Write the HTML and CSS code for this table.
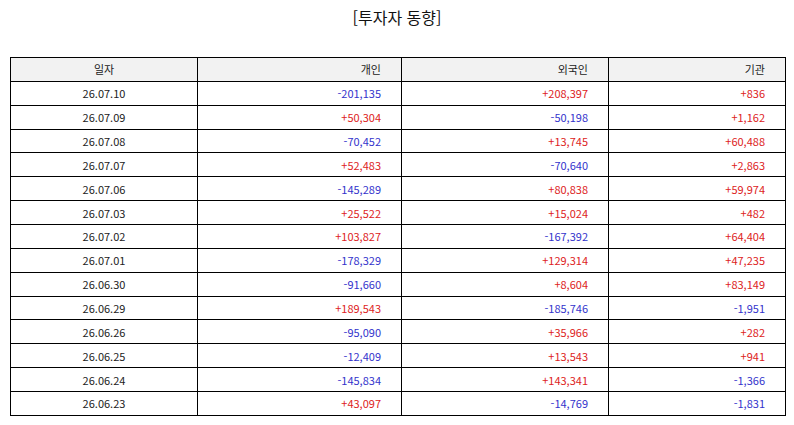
FILE: index.html
```html
<!DOCTYPE html>
<html lang="ko">
<head>
<meta charset="utf-8">
<title>투자자 동향</title>
<link rel="stylesheet" href="styles.css">
</head>
<body>
<h1 class="title">[투자자 동향]</h1>
<table class="grid">
  <colgroup>
    <col class="c-date"><col class="c-ind"><col class="c-for"><col class="c-inst">
  </colgroup>
  <thead>
    <tr><th class="center">일자</th><th>개인</th><th>외국인</th><th>기관</th></tr>
  </thead>
  <tbody>
    <tr><td class="center">26.07.10</td><td class="neg">-201,135</td><td class="pos">+208,397</td><td class="pos">+836</td></tr>
    <tr><td class="center">26.07.09</td><td class="pos">+50,304</td><td class="neg">-50,198</td><td class="pos">+1,162</td></tr>
    <tr><td class="center">26.07.08</td><td class="neg">-70,452</td><td class="pos">+13,745</td><td class="pos">+60,488</td></tr>
    <tr><td class="center">26.07.07</td><td class="pos">+52,483</td><td class="neg">-70,640</td><td class="pos">+2,863</td></tr>
    <tr><td class="center">26.07.06</td><td class="neg">-145,289</td><td class="pos">+80,838</td><td class="pos">+59,974</td></tr>
    <tr><td class="center">26.07.03</td><td class="pos">+25,522</td><td class="pos">+15,024</td><td class="pos">+482</td></tr>
    <tr><td class="center">26.07.02</td><td class="pos">+103,827</td><td class="neg">-167,392</td><td class="pos">+64,404</td></tr>
    <tr><td class="center">26.07.01</td><td class="neg">-178,329</td><td class="pos">+129,314</td><td class="pos">+47,235</td></tr>
    <tr><td class="center">26.06.30</td><td class="neg">-91,660</td><td class="pos">+8,604</td><td class="pos">+83,149</td></tr>
    <tr><td class="center">26.06.29</td><td class="pos">+189,543</td><td class="neg">-185,746</td><td class="neg">-1,951</td></tr>
    <tr><td class="center">26.06.26</td><td class="neg">-95,090</td><td class="pos">+35,966</td><td class="pos">+282</td></tr>
    <tr><td class="center">26.06.25</td><td class="neg">-12,409</td><td class="pos">+13,543</td><td class="pos">+941</td></tr>
    <tr><td class="center">26.06.24</td><td class="neg">-145,834</td><td class="pos">+143,341</td><td class="neg">-1,366</td></tr>
    <tr><td class="center">26.06.23</td><td class="pos">+43,097</td><td class="neg">-14,769</td><td class="neg">-1,831</td></tr>
  </tbody>
</table>
</body>
</html>
```
FILE: styles.css
```css
html, body {
  margin: 0;
  padding: 0;
  background: #ffffff;
}
body {
  font-family: "Noto Sans CJK KR", "Noto Sans", sans-serif;
  color: #222222;
}
.title {
  margin: 0;
  height: 57px;
  padding-top: 6px;
  box-sizing: border-box;
  font-size: 16px;
  font-weight: normal;
  line-height: 22px;
  text-align: center;
  color: #111111;
}
.grid {
  margin: 0 0 0 10px;
  width: 775px;
  border-collapse: collapse;
  table-layout: fixed;
  font-size: 11px;
}
.c-date { width: 187px; }
.c-ind { width: 204px; }
.c-for { width: 207px; }
.c-inst { width: 177px; }
.grid tr {
  height: 23.87px;
}
.grid th, .grid td {
  border: 1px solid #000000;
  padding: 0 20px 0 4px;
  text-align: right;
  line-height: 14px;
  font-weight: normal;
  white-space: nowrap;
}
.grid th {
  background: #f2f2f2;
  color: #222222;
}
.grid .center {
  text-align: center;
  padding: 0;
  color: #222222;
}
.neg { color: #3333cc; }
.pos { color: #dd2222; }
```
